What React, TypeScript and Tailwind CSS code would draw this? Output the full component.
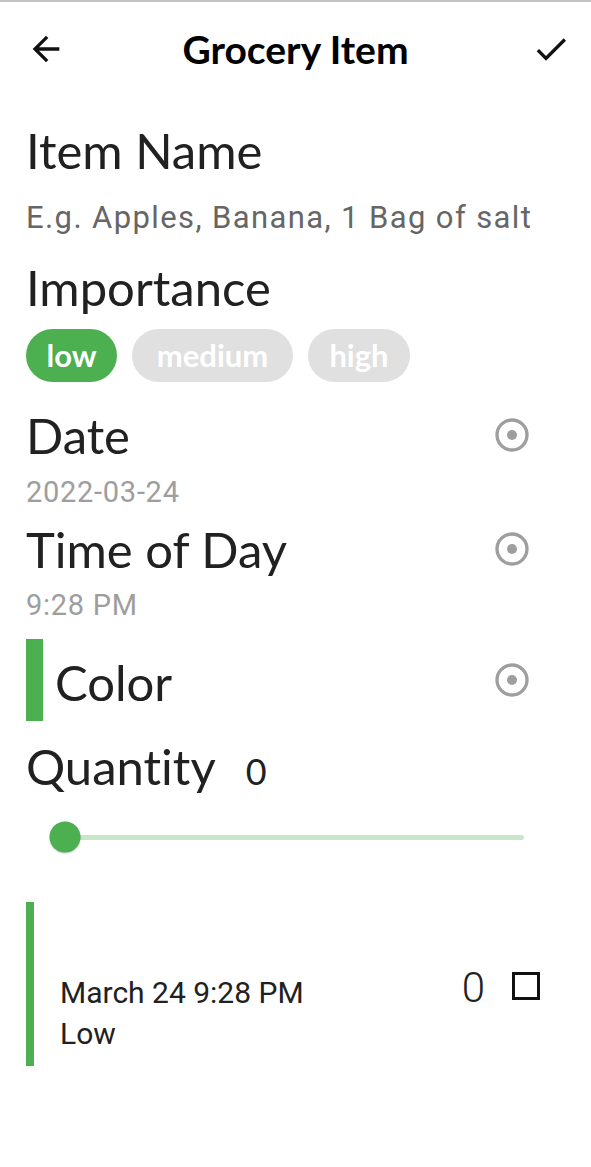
import React from 'react';

const lato = { fontFamily: 'Lato, "Noto Sans", sans-serif', fontVariantLigatures: 'none' as const };

const RadioIcon = () => (
  <svg width="40" height="40" viewBox="0 0 24 24" fill="none">
    <circle cx="12" cy="12" r="9" stroke="#9e9e9e" strokeWidth="2" />
    <circle cx="12" cy="12" r="3" fill="#9e9e9e" />
  </svg>
);

const App: React.FC = () => {
  const chips = [
    { label: 'low', active: true, w: 'w-[91px]' },
    { label: 'medium', active: false, w: 'w-[161px]' },
    { label: 'high', active: false, w: 'w-[102px]' },
  ];

  return (
    <div className="min-h-[1167px] w-[591px] bg-white border-t-2 border-[#c4c4c4] font-['Roboto',sans-serif]">
      {/* App bar */}
      <div className="grid h-[94px] grid-cols-[1fr_auto_1fr] items-center">
        <svg className="ml-[26px] justify-self-start" width="40" height="40" viewBox="0 0 24 24">
          <path d="M20 11H7.83l5.59-5.59L12 4l-8 8 8 8 1.41-1.41L7.83 13H20v-2z" fill="#111" />
        </svg>
        <h1 style={lato} className="text-[39px] font-bold leading-none text-black">Grocery Item</h1>
        <svg className="mr-[20px] justify-self-end" width="40" height="40" viewBox="0 0 24 24">
          <path d="M9 16.17L4.83 12l-1.42 1.41L9 19 21 7l-1.41-1.41z" fill="#111" />
        </svg>
      </div>

      <div className="pl-[26px]">
        <div style={lato} className="mt-[26px] text-[49px] leading-[56px] text-[#212121]">Item Name</div>
        <div className="mt-[20px] text-[31px] leading-[40px] tracking-[0.045em] text-[#666666]">
          E.g. Apples, Banana, 1 Bag of salt
        </div>

        <div style={lato} className="mt-[21px] text-[49px] leading-[56px] text-[#212121]">Importance</div>
        <div className="mt-[14px] flex gap-[15px]">
          {chips.map((c) => (
            <div
              key={c.label}
              style={lato}
              className={`flex h-[53px] items-center justify-center rounded-full text-[31px] font-bold text-white ${c.w} ${
                c.active ? 'bg-[#4caf50]' : 'bg-[#e0e0e0]'
              }`}
            >
              {c.label}
            </div>
          ))}
        </div>

        <div className="mt-[25px] flex items-center justify-between pr-[59px]">
          <div style={lato} className="text-[49px] leading-[56px] text-[#212121]">Date</div>
          <RadioIcon />
        </div>
        <div className="mt-[12px] text-[29px] leading-[34px] tracking-[0.025em] text-[#9e9e9e]">2022-03-24</div>

        <div className="mt-[12px] flex items-center justify-between pr-[59px]">
          <div style={lato} className="text-[49px] leading-[56px] text-[#212121]">Time of Day</div>
          <RadioIcon />
        </div>
        <div className="mt-[11px] text-[29px] leading-[34px] tracking-[0.025em] text-[#9e9e9e]">9:28 PM</div>

        <div className="mt-[17px] flex h-[82px] items-center justify-between pr-[59px]">
          <div className="flex h-full items-center">
            <div className="h-full w-[17px] bg-[#4caf50]" />
            <div style={lato} className="ml-[12px] mt-[3px] text-[49px] leading-[56px] text-[#212121]">Color</div>
          </div>
          <RadioIcon />
        </div>

        <div style={lato} className="mt-[17px] flex items-baseline gap-[30px] text-[#212121]">
          <span className="text-[49px] leading-[56px]">Quantity</span>
          <span className="text-[36px]">0</span>
        </div>

        {/* Slider */}
        <div className="relative ml-[39px] mr-[67px] mt-[15px] flex h-[48px] items-center">
          <div className="h-[5px] w-full rounded-full bg-[#c8e6c9]" />
          <div className="absolute left-0 top-1/2 h-[31px] w-[31px] -translate-x-1/2 -translate-y-1/2 rounded-full bg-[#4caf50] shadow-[0_1px_2px_rgba(0,0,0,0.2)]" />
        </div>

        {/* Preview card */}
        <div className="mt-[41px] flex h-[164px] border-l-[8px] border-[#4caf50]">
          <div className="flex flex-1 items-start justify-between pl-[26px] pr-[51px] pt-[66px]">
            <div className="pt-[4px] text-[30px] leading-[41px] text-[#212121]">
              <div>March 24 9:28 PM</div>
              <div>Low</div>
            </div>
            <div className="flex items-center gap-[27px]">
              <span className="text-[42px] font-light leading-[40px] text-[#212121]">0</span>
              <div className="-mt-[4px] h-[28px] w-[28px] border-[3px] border-[#111]" />
            </div>
          </div>
        </div>
      </div>
    </div>
  );
};

export default App;
